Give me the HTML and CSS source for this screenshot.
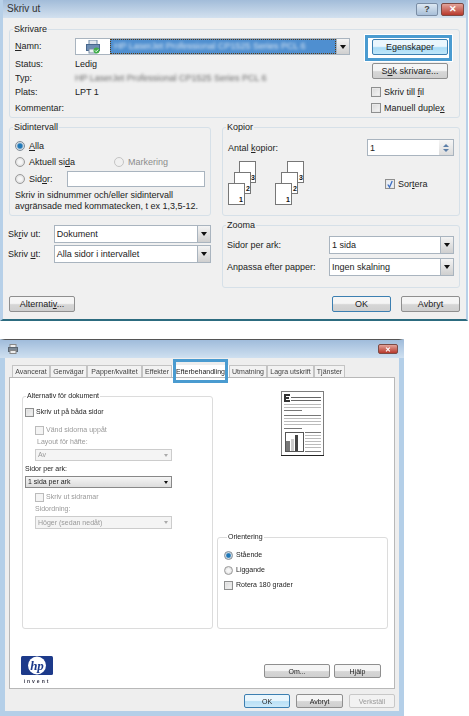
FILE: index.html
```html
<!DOCTYPE html>
<html lang="sv">
<head>
<meta charset="utf-8">
<title>Skriv ut</title>
<link rel="stylesheet" href="styles.css">
</head>
<body>
<section class="win win-print">
  <header class="title">
    <span class="title-text">Skriv ut</span>
    <span class="caption">
      <span class="cap-btn cap-help">?</span>
      <span class="cap-btn cap-close">✕</span>
    </span>
  </header>
  <div class="client">
    <fieldset class="group group-printer">
      <legend>Skrivare</legend>
      <div class="printer">
        <div class="printer-info">
          <span><u>N</u>amn:</span>
          <div class="combo combo-printer">
            <span class="printer-icon">
              <svg width="14" height="14" viewBox="0 0 14 14"><rect x="3" y="0" width="8" height="5" fill="#dfe6ee" stroke="#6f8aa8"/><rect x="0.5" y="4.5" width="13" height="6" fill="#6d8db3" stroke="#47678d"/><rect x="3" y="9" width="7" height="4" fill="#eef2f6" stroke="#7a8ea5"/><circle cx="10.5" cy="10.5" r="3" fill="#3fae49"/><path d="M9 10.5l1.2 1.2 2-2.2" stroke="#fff" fill="none"/></svg>
            </span>
            <span class="selection"><span class="blurred">HP LaserJet Professional CP1525 Series PCL 6</span></span>
            <span class="combo-btn"></span>
          </div>
          <span>Status:</span><span>Ledig</span>
          <span>Typ:</span><span class="blurred muted">HP LaserJet Professional CP1525 Series PCL 6</span>
          <span>Plats:</span><span>LPT 1</span>
          <span>Kommentar:</span><span></span>
        </div>
        <div class="printer-actions">
          <div class="spot"><button class="btn btn-hot">Egenskaper</button></div>
          <button class="btn btn-find">S<u>ö</u>k skrivare...</button>
          <label class="check check-file"><i class="box"></i><span>Skriv till <u>f</u>il</span></label>
          <label class="check check-duplex"><i class="box"></i><span>Manuell duple<u>x</u></span></label>
        </div>
      </div>
    </fieldset>
    <div class="columns">
      <div class="col-left">
        <fieldset class="group group-range">
          <legend>Sidintervall</legend>
          <div class="range">
            <label class="radio"><i class="dot dot-on"></i><span><u>A</u>lla</span></label>
            <div class="range-row">
              <label class="radio radio-current"><i class="dot"></i><span>Aktuell si<u>d</u>a</span></label>
              <label class="radio radio-off"><i class="dot dot-off"></i><span>Markering</span></label>
            </div>
            <div class="range-row">
              <label class="radio radio-pages"><i class="dot"></i><span>Sid<u>o</u>r:</span></label>
              <span class="field field-pages"></span>
            </div>
            <p class="hint">Skriv in sidnummer och/eller sidintervall<br>avgränsade med kommatecken, t ex 1,3,5-12.</p>
          </div>
        </fieldset>
        <div class="print-what">
          <div class="what-row">
            <span class="what-label">Sk<u>r</u>iv ut:</span>
            <div class="combo combo-what"><span class="combo-text">Dokument</span><span class="combo-btn"></span></div>
          </div>
          <div class="what-row">
            <span class="what-label">Skriv <u>u</u>t:</span>
            <div class="combo combo-what"><span class="combo-text">Alla sidor i intervallet</span><span class="combo-btn"></span></div>
          </div>
        </div>
      </div>
      <div class="col-right">
        <fieldset class="group group-copies">
          <legend>Kopior</legend>
          <div class="copies-top">
            <span>Antal <u>k</u>opior:</span>
            <div class="spin">
              <span class="spin-text">1</span>
              <span class="spin-btns"><i class="arrow-up"></i><i class="arrow-down"></i></span>
            </div>
          </div>
          <div class="copies-bottom">
            <svg class="stacks" width="77" height="44" viewBox="0 0 77 44">
              <g class="stack">
                <rect x="11.5" y="0.5" width="16" height="21"/><rect x="6.5" y="11.5" width="16" height="21"/><rect x="0.5" y="22.5" width="16" height="21"/>
                <text x="23" y="19">3</text><text x="18" y="30">2</text><text x="11" y="41">1</text>
              </g>
              <g class="stack">
                <rect x="59.5" y="0.5" width="16" height="21"/><rect x="53.5" y="11.5" width="16" height="21"/><rect x="47.5" y="22.5" width="16" height="21"/>
                <text x="71" y="19">3</text><text x="65" y="30">2</text><text x="58" y="41">1</text>
              </g>
            </svg>
            <label class="check check-collate"><i class="box box-on"><svg width="9" height="9" viewBox="0 0 9 9"><path d="M2 4.5l2 3 3-7" stroke="#3f6fc0" stroke-width="1.5" fill="none"/></svg></i><span>Sor<u>t</u>era</span></label>
          </div>
        </fieldset>
        <fieldset class="group group-zoom">
          <legend>Zooma</legend>
          <div class="zoom-row zoom-first">
            <span>Sidor per ark:</span>
            <div class="combo combo-zoom"><span class="combo-text">1 sida</span><span class="combo-btn"></span></div>
          </div>
          <div class="zoom-row">
            <span>Anpassa efter papper:</span>
            <div class="combo combo-zoom combo-tall"><span class="combo-text">Ingen skalning</span><span class="combo-btn"></span></div>
          </div>
        </fieldset>
      </div>
    </div>
    <footer class="footer">
      <button class="btn btn-options">Alternati<u>v</u>...</button>
      <span class="footer-gap"></span>
      <button class="btn btn-ok">OK</button>
      <button class="btn btn-cancel">Avbryt</button>
    </footer>
  </div>
</section>

<section class="win win-props">
  <header class="title title-props">
    <svg width="10" height="10" viewBox="0 0 10 10"><rect x="2" y="0.5" width="6" height="3" fill="#eee" stroke="#888"/><rect x="0.5" y="3.5" width="9" height="4" fill="#7a8794" stroke="#5a6672"/><rect x="2" y="6.5" width="6" height="3" fill="#eee" stroke="#888"/></svg>
    <span class="cap-btn cap-close cap-close-props">✕</span>
  </header>
  <div class="props-client">
    <nav class="tabs">
      <span class="tab tab-a">Avancerat</span>
      <span class="tab tab-b">Genvägar</span>
      <span class="tab tab-c">Papper/kvalitet</span>
      <span class="tab tab-d">Effekter</span>
      <span class="tab tab-active">Efterbehandling</span>
      <span class="tab tab-f">Utmatning</span>
      <span class="tab tab-g">Lagra utskrift</span>
      <span class="tab tab-h">Tjänster</span>
    </nav>
    <div class="panel">
      <div class="panel-top">
        <fieldset class="group group-doc">
          <legend>Alternativ för dokument</legend>
          <label class="pcheck pcheck-both"><i class="box"></i><span>Skriv ut på båda sidor</span></label>
          <label class="pcheck pcheck-sub pcheck-flip gray"><i class="box box-off"></i><span>Vänd sidorna uppåt</span></label>
          <span class="plabel plabel-layout gray">Layout för häfte:</span>
          <div class="pselect pselect-sub pselect-off"><span>Av</span><i class="caret"></i></div>
          <span class="plabel plabel-pages">Sidor per ark:</span>
          <div class="pselect pselect-on"><span>1 sida per ark</span><i class="caret"></i></div>
          <label class="pcheck pcheck-sub pcheck-frames gray"><i class="box box-off"></i><span>Skriv ut sidramar</span></label>
          <span class="plabel plabel-order gray">Sidordning:</span>
          <div class="pselect pselect-sub pselect-off pselect-last"><span>Höger (sedan nedåt)</span><i class="caret"></i></div>
        </fieldset>
        <div class="panel-right">
          <svg class="preview" width="43" height="65" viewBox="0 0 43 65">
            <rect x="0.5" y="0.5" width="42" height="64" fill="#fff" stroke="#7d7d7d"/>
            <path d="M0 64.5h43" stroke="#222"/>
            <path d="M3 3h6v2H5v1h3v2H5v1h4v2H3z" fill="#333"/>
            <path d="M10 6.5h30M10 9.5h30" stroke="#666"/>
            <path d="M3 13.5h37M3 16.5h37M3 24.5h37M3 27.5h37M3 30.5h37M3 33.5h37M24 44.5h16M24 47.5h16M24 50.5h16M24 53.5h16M24 56.5h16" stroke="#bbb"/>
            <path d="M3 19.5h18M3 24.5h37M3 37.5h18M24 41.5h16M24 60.5h16" stroke="#777"/>
            <rect x="4.5" y="41.5" width="18" height="19" fill="#fff" stroke="#555"/>
            <rect x="5" y="50" width="4" height="10" fill="#777"/>
            <rect x="10" y="48" width="3" height="12" fill="#ccc"/>
            <rect x="14" y="44" width="3" height="16" fill="#444"/>
          </svg>
          <fieldset class="group group-orient">
            <legend>Orientering</legend>
            <label class="pcheck"><i class="dot dot-on"></i><span>Stående</span></label>
            <label class="pcheck"><i class="dot"></i><span>Liggande</span></label>
            <label class="pcheck"><i class="box"></i><span>Rotera 180 grader</span></label>
          </fieldset>
        </div>
      </div>
      <div class="panel-bottom">
        <div class="hp">
          <svg width="32" height="19" viewBox="0 0 32 19">
            <rect width="32" height="19" rx="1.5" fill="#1d3a8a"/>
            <ellipse cx="16" cy="9.5" rx="9" ry="9" fill="#fff"/>
            <text x="16" y="14" class="hp-letters">hp</text>
          </svg>
          <span class="hp-invent">invent</span>
        </div>
        <span class="footer-gap"></span>
        <button class="btn btn-about">Om...</button>
        <button class="btn btn-help">Hjälp</button>
      </div>
    </div>
    <footer class="props-footer">
      <button class="btn btn-pok">OK</button>
      <button class="btn btn-pcancel">Avbryt</button>
      <button class="btn btn-apply" disabled>Verkställ</button>
    </footer>
  </div>
</section>
</body>
</html>
```

FILE: styles.css
```css
* { box-sizing: border-box; }
html, body { margin: 0; padding: 0; background: #fff; }
body { width: 469px; height: 716px; overflow: hidden; font: 9px/14px "Liberation Sans", sans-serif; color: #222; }
u { text-decoration: underline; }
i { display: block; flex: none; }

.win { background: #f0f0f0; }
.win-print { width: 468px; height: 321px; border: solid #b7d0e8; border-width: 0 2px 2px 3px; border-bottom-color: #2c6b7f; display: flex; flex-direction: column; }
.title { height: 18px; flex: none; display: flex; align-items: center; justify-content: space-between; background: linear-gradient(#a2bcd9, #d3e1ef); }
.title-text { font-size: 10px; padding-left: 4px; color: #333; }
.caption { display: flex; gap: 3px; padding-right: 2px; }
.cap-btn { width: 21px; height: 13px; display: flex; align-items: center; justify-content: center; font-size: 9px; line-height: 1; font-weight: bold; border: 1px solid #7a8da5; border-radius: 2px; }
.cap-help { width: 22px; color: #444; background: linear-gradient(#dce7f2, #a8bfd8); }
.cap-close { width: 23px; color: #fff; background: linear-gradient(#e2a39a, #b8392c); border-color: #7d4a44; }

.client { flex: 1; padding: 6px 6px 0; display: flex; flex-direction: column; }
.group { margin: 0; padding: 0; min-width: 0; border: 1px solid #d6e0e8; border-radius: 3px; }
.group legend { padding: 0 1px; margin-left: 3px; line-height: 11px; }
.group-printer { height: 94px; }
.printer { display: flex; padding: 3px 0 0 5px; }
.printer-info { width: 335px; display: grid; grid-template-columns: 60px 275px; grid-template-rows: 19px 14px 14px 16px 14px; align-items: start; }
.printer-info > span { white-space: nowrap; overflow: hidden; line-height: 14px; }
.printer-info > span:first-child { line-height: 17px; }
.blurred { filter: blur(1.4px); }
.muted { color: #666; }

.combo { display: flex; height: 18px; background: #fff; border: 1px solid #a9b4bf; }
.combo-printer { height: 17px; }
.printer-icon { width: 34px; display: flex; align-items: center; padding-left: 10px; }
.selection { flex: 1; min-width: 0; background: #4f8fd0; color: #dfeaf5; outline: 1px dotted #5b3b12; outline-offset: -1px; line-height: 15px; padding-left: 4px; white-space: nowrap; overflow: hidden; }
.combo-btn { width: 13px; flex: none; display: flex; align-items: center; justify-content: center; background: linear-gradient(#f4f4f4, #cfcfcf); border-left: 1px solid #a9b4bf; }
.combo-btn::after { content: ""; border: 3px solid transparent; border-top: 4px solid #111; border-bottom: 0; }
.combo-text { flex: 1; padding-left: 2px; line-height: 16px; white-space: nowrap; }
.combo-tall { height: 18px; }

.printer-actions { display: flex; flex-direction: column; align-items: flex-start; margin-left: 22px; padding-top: 1px; }
.btn { display: block; padding: 0; font: inherit; color: #222; line-height: 1; border: 1px solid #8f8f8f; border-radius: 2px; background: linear-gradient(#f5f5f5 45%, #d6d6d6 55%, #cfcfcf); }
.spot { position: relative; isolation: isolate; height: 16px; }
.spot::before { content: ""; position: absolute; z-index: -1; inset: -4px -4px -6px -7px; background: #fff; border: 3px solid #4a9bd0; outline: 1px solid #fff; }
.btn-hot { width: 76px; height: 16px; border-color: #3c7fb1; background: linear-gradient(#eaf6fd 45%, #a9dbf6 55%, #bfe6f9); }
.btn-find { width: 76px; height: 16px; margin-top: 8px; }
.check { display: flex; align-items: center; gap: 3px; line-height: 14px; white-space: nowrap; }
.box { width: 10px; height: 10px; border: 1px solid #8e8f8f; background: linear-gradient(135deg, #d8d8d8, #f6f6f6); box-shadow: inset 0 0 0 1px #e8e8e8; }
.box-on { display: flex; align-items: center; justify-content: center; background: #e8eef6; }
.box-off { border-color: #bbb; background: #f4f4f4; box-shadow: none; }
.check-file { margin-top: 6px; margin-left: -1px; }
.check-duplex { margin-top: 2px; margin-left: -1px; }

.columns { display: flex; gap: 11px; margin-top: 4px; }
.col-left { width: 202px; }
.col-right { width: 238px; }
.group-range, .group-copies { height: 94px; }
.range { padding: 6px 0 0 5px; display: flex; flex-direction: column; }
.range-row { display: flex; align-items: center; margin-top: 2px; }
.radio { display: flex; align-items: center; gap: 4px; height: 14px; white-space: nowrap; }
.dot { width: 10px; height: 10px; border-radius: 50%; border: 1px solid #9a9a9a; background: radial-gradient(circle, #f6f6f6 30%, #d5d5d5 90%); }
.dot-on { background: radial-gradient(circle, #1f78b8 35%, #cfd9e2 60%, #e8e8e8 90%); border-color: #7f8c97; }
.dot-off { border-color: #c4c4c4; background: #f0f0f0; }
.radio-current { width: 99px; }
.radio-off { color: #8c8c8c; }
.radio-pages { width: 52px; }
.range-row .field-pages { display: block; width: 138px; height: 16px; background: #fff; border: 1px solid #a9b4bf; }
.hint { margin: 3px 0 0; line-height: 11px; white-space: nowrap; }

.print-what { margin-top: 9px; display: flex; flex-direction: column; gap: 2px; }
.what-row { display: flex; align-items: center; margin-left: -1px; }
.what-label { width: 46px; }
.combo-what { width: 158px; }

.copies-top { display: flex; justify-content: space-between; align-items: center; padding: 6px 5px 0; }
.spin { width: 87px; height: 17px; background: #fff; border: 1px solid #a9b4bf; display: flex; }
.spin-text { flex: 1; padding-left: 2px; line-height: 16px; }
.spin-btns { width: 14px; display: flex; flex-direction: column; align-items: center; justify-content: center; gap: 2px; background: linear-gradient(#f6f6f6, #dcdcdc); }
.arrow-up { border: 3px solid transparent; border-bottom: 3px solid #5c7fa8; border-top: 0; }
.arrow-down { border: 3px solid transparent; border-top: 3px solid #5c7fa8; border-bottom: 0; }
.copies-bottom { display: flex; margin-top: 5px; padding-left: 5px; }
.stacks { flex: none; }
.stack rect { fill: #fff; stroke: #777; }
.stack text { font: bold 7px "Liberation Sans", sans-serif; fill: #111; }
.check-collate { margin: 16px 0 0 80px; gap: 3px; height: 14px; }

.group-zoom { height: 68px; margin-top: 4px; }
.zoom-row { display: flex; align-items: center; justify-content: space-between; padding: 0 5px 0 4px; margin-top: 4px; }
.zoom-first { margin-top: 5px; }
.combo-zoom { width: 125px; }

.footer { display: flex; gap: 10px; margin-top: 8px; }
.footer-gap { flex: 1; }
.btn-options { width: 66px; height: 16px; }
.btn-ok { width: 59px; height: 16px; border-color: #3c7fb1; }
.btn-cancel { width: 59px; height: 16px; }

.win-props { width: 404px; height: 377px; margin-top: 18px; border: solid #b4cfe8; border-width: 1px 5px 5px; border-top-color: #555; box-shadow: inset 0 -1px 0 #b4cfe8, 0 1px 0 #2c6b7f; display: flex; flex-direction: column; background: #eee; filter: blur(.3px); font-size: 7px; line-height: 10px; }
.title-props { margin: 0 -5px; padding: 0 6px 0 8px; align-items: center; background: linear-gradient(#a0bcdb, #cfe0f0); position: relative; }
.cap-close-props { width: 20px; height: 10px; font-size: 7px; }
.props-client { flex: 1; display: flex; flex-direction: column; background: #eee; padding: 0 4px; }
.tabs { height: 19px; padding: 7px 0 0 3px; display: flex; }
.tab { height: 12px; line-height: 11px; text-align: center; border: 1px solid #c4c4c4; border-bottom: 0; color: #444; background: #f2f2f2; white-space: nowrap; }
.tab-a { width: 38px; }
.tab-b { width: 37px; }
.tab-c { width: 55px; }
.tab-d { width: 30px; }
.tab-active { width: 57px; position: relative; background: #fff; color: #222; border-color: transparent; }
.tab-active::after { content: ""; position: absolute; top: -7px; left: 0; right: 0; bottom: -6px; border: 3px solid #4a9bd0; }
.tab-f { width: 38px; }
.tab-g { width: 47px; }
.tab-h { width: 31px; }

.panel { height: 312px; background: #fff; border: 1px solid #b8b8b8; display: flex; flex-direction: column; }
.panel-top { display: flex; gap: 4px; padding: 13px 0 0 12px; height: 251px; }
.win-props .group legend { line-height: 10px; color: #222; }
.group-doc { width: 191px; height: 238px; border-color: #dcdcdc; display: flex; flex-direction: column; }
.pcheck { display: flex; align-items: center; gap: 2px; height: 10px; white-space: nowrap; }
.pcheck .box, .pcheck .dot { width: 9px; height: 9px; }
.pcheck-both { margin: 6px 0 0 2px; }
.pcheck-sub { margin-left: 12px; }
.pcheck-flip { margin-top: 8px; }
.gray { color: #999; }
.plabel { display: block; height: 10px; white-space: nowrap; }
.plabel-layout { margin: 2px 0 0 14px; }
.plabel-pages { margin: 3px 0 0 2px; }
.plabel-order { margin: 2px 0 0 12px; }
.pselect { height: 12px; display: flex; align-items: center; justify-content: space-between; padding: 0 3px 0 2px; border: 1px solid #bbb; white-space: nowrap; }
.pselect-sub { margin: 2px 0 0 12px; width: 137px; }
.pselect-on { margin: 2px 0 0 2px; width: 147px; background: linear-gradient(#f5f5f5, #ddd); border-color: #888; }
.pselect-off { color: #999; background: #f4f4f4; border-color: #ccc; }
.pselect-last { height: 13px; }
.pcheck-frames { margin-top: 4px; }
.caret { border: 2.5px solid transparent; border-top: 3px solid #111; border-bottom: 0; }
.pselect-off .caret { border-top-color: #aaa; }

.panel-right { width: 171px; display: flex; flex-direction: column; }
.preview { display: block; flex: none; margin-left: 64px; }
.group-orient { height: 97px; margin-top: 76px; border-color: #dcdcdc; padding: 8px 0 0 6px; display: flex; flex-direction: column; gap: 5px; }
.group-orient .pcheck { gap: 3px; }

.panel-bottom { display: flex; gap: 4px; flex: 1; padding: 0 13px 0 11px; }
.hp { padding-top: 27px; width: 32px; display: flex; flex-direction: column; align-items: center; }
.hp-letters { font: italic bold 13px "Liberation Serif", serif; fill: #1d3a8a; text-anchor: middle; }
.hp-invent { font-size: 5px; line-height: 6px; letter-spacing: 2px; margin-top: 3px; font-weight: bold; color: #334; }
.btn-about { width: 66px; height: 14px; margin-top: 35px; }
.btn-help { width: 47px; height: 14px; margin-top: 35px; }

.props-footer { display: flex; justify-content: flex-end; gap: 6px; padding-top: 5px; }
.btn-pok { width: 46px; height: 14px; border-color: #3c7fb1; background: linear-gradient(#eaf6fd 45%, #b9e0f6 55%, #cce9f9); }
.btn-pcancel { width: 47px; height: 14px; }
.btn-apply { width: 46px; height: 14px; color: #999; border-color: #c8c8c8; background: #f2f2f2; }
```
